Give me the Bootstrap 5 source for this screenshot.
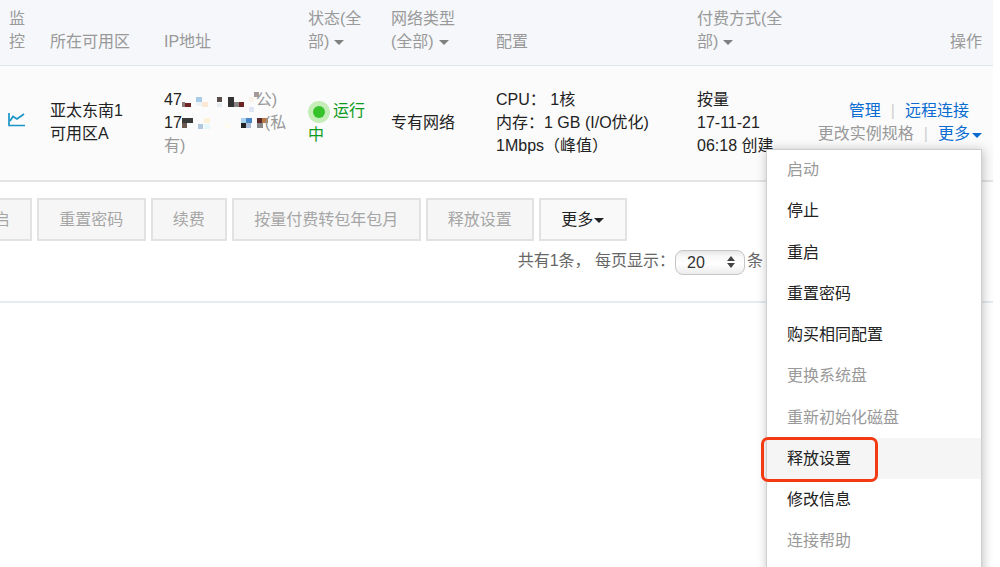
<!DOCTYPE html>
<html lang="zh">
<head>
<meta charset="utf-8">
<title>实例列表</title>
<link rel="stylesheet" href="https://cdn.jsdelivr.net/npm/bootstrap@5.3.0/dist/css/bootstrap.min.css">
<style>
html,body{height:567px;overflow:hidden;background:#fff}
body{font-family:"Liberation Sans","Noto Sans CJK SC",sans-serif;font-size:16px;color:#222;position:relative}
.inst-table{table-layout:fixed;width:993px;border-collapse:collapse;line-height:23px}
.inst-table th,.inst-table td{padding:0 9px;vertical-align:middle}
.inst-table th:last-child,.inst-table td:last-child{padding-right:11px}
.inst-table th{height:65px;background:#f5f7fa;border-bottom:1px solid #e1e6ec;color:#999;font-weight:400;vertical-align:bottom;padding-bottom:12px}
.inst-table td{height:116px;background:#fbfbfb;border-bottom:2px solid #e4e4e4;padding-bottom:1px}
.caret-s{display:inline-block;width:0;height:0;border:5px solid transparent;border-top:5px solid #808080;border-bottom:0;vertical-align:middle;margin-left:5px}
.caret-b{display:inline-block;width:0;height:0;border:5.5px solid transparent;border-top:5.5px solid #0a6cd0;border-bottom:0;vertical-align:middle;margin-left:2px}
.caret-k{display:inline-block;width:0;height:0;border:5px solid transparent;border-top:5px solid #222;border-bottom:0;vertical-align:middle;margin-left:1px}
.muted-t{color:#999}
.run-t{color:#0d9a1c}
.dot-wrap{display:inline-block;width:22px;height:22px;border-radius:50%;background:#c4edb8;vertical-align:middle;position:relative;margin-right:3px}
.dot-core{position:absolute;left:5px;top:5px;width:12px;height:12px;border-radius:50%;background:#35c22b}
.blur-a{vertical-align:-3px;overflow:visible}
.blue-a{color:#0a6cd0;text-decoration:none}
.sep-a{color:#d0d0d0;margin:0 10px}
.first-ln{padding-right:13px}
.chart-i{margin-bottom:5px}
.bar-a{margin:16px 0 0 -44.5px;gap:5px}
.act-btn{height:43px;padding:0 20.25px;font-size:16px;border:2px solid #e2e2e2;border-radius:0;background:#f6f6f6;color:#a6a6a6;white-space:nowrap}
.act-btn.on{color:#222;background:#f9f9f9;padding-right:21px}
.pager-a{width:993px;padding:8px 230px 26px 0;color:#666;border-bottom:2px solid #e6ebf1}
.pager-t{margin-bottom:2px}
.sel-a{width:70px;height:25px;margin:0 2px 0 0;padding:0 0 0 11px;font:16px/23px "Liberation Sans",sans-serif;color:#333;border:1px solid #c6c6c6;border-radius:8px;background:linear-gradient(#e6e6e6,#f8f8f8 25%,#fff 55%,#ececec);position:relative}
.spin-a{position:absolute;right:9px;top:5px;display:flex;flex-direction:column;gap:2px}
.spin-u,.spin-d{width:0;height:0;border:4px solid transparent}
.spin-u{border-bottom:5px solid #444;border-top:0}
.spin-d{border-top:5px solid #444;border-bottom:0}
.pop-menu{position:absolute;left:766px;top:149px;width:216px;height:440px;margin:0;padding:0;list-style:none;background:#fff;border:1px solid #cfcfcf;box-shadow:1px 1px 10px rgba(0,0,0,.25)}
.pop-item{height:41.25px;line-height:41.25px;padding-left:20px;color:#222}
.pop-item:first-child{margin-top:-1px}
.pop-item.off{color:#999}
.pop-item.hot{background:#f5f5f5}
.red-box{position:absolute;left:761px;top:437px;width:117px;height:45px;border:3px solid #f43a12;border-radius:7px}
</style>
</head>
<body>
<table class="inst-table">
<colgroup><col style="width:41px"><col style="width:114px"><col style="width:144px"><col style="width:83px"><col style="width:105px"><col style="width:201px"><col style="width:105px"><col></colgroup>
<thead><tr>
<th>监控</th><th>所在可用区</th><th>IP地址</th>
<th>状态(全部)<span class="caret-s"></span></th>
<th>网络类型<br>(全部)<span class="caret-s"></span></th>
<th>配置</th>
<th>付费方式(全部)<span class="caret-s"></span></th>
<th class="text-end">操作</th>
</tr></thead>
<tbody><tr>
<td class="px-0 ps-2"><svg class="d-block chart-i" width="17" height="14" viewBox="0 0 17 14" fill="none" stroke="#1b94c8" stroke-width="1.7"><path d="M1 0v12.5h16"/><path d="M2 8l3-4.5 4 2.5 7-5"/></svg></td>
<td>亚太东南1<br>可用区A</td>
<td>47<svg class="blur-a" width="74" height="16" viewBox="183 91 74 16"><rect x="183" y="101" width="3" height="5" fill="#8a7a78"/><rect x="186" y="102" width="6" height="4" fill="#6b2525"/><rect x="197" y="96" width="6" height="5" fill="#a7cbe9"/><rect x="203" y="101" width="6" height="5" fill="#fbe9d3"/><rect x="197" y="101" width="6" height="4" fill="#eef3f7"/><rect x="218" y="96" width="5" height="5" fill="#5a4e4a"/><rect x="218" y="102" width="5" height="4" fill="#e5edf3"/><rect x="229" y="96" width="6" height="10" fill="#333"/><rect x="235" y="101" width="5" height="5" fill="#8a8585"/><rect x="240" y="101" width="5" height="5" fill="#6b2525"/><rect x="250" y="96" width="5" height="5" fill="#fbf3ea"/><rect x="255" y="91" width="5" height="5" fill="#a39a98"/><rect x="250" y="106" width="5" height="5" fill="#dfe5f3"/></svg><span class="muted-t">公)</span><br>17<svg class="blur-a" width="83" height="16" viewBox="181 114 83 16"><rect x="181" y="117" width="11" height="5" fill="#3a3a3a"/><rect x="181" y="122" width="5" height="5" fill="#6a5a50"/><rect x="197" y="123" width="5" height="5" fill="#b0c7dd"/><rect x="203" y="117" width="6" height="5" fill="#fdf1d8"/><rect x="203" y="123" width="6" height="5" fill="#e6f7fa"/><rect x="224" y="122" width="5" height="5" fill="#fefbf0"/><rect x="240" y="117" width="5" height="5" fill="#a9d2ee"/><rect x="245" y="117" width="6" height="5" fill="#4a86c6"/><rect x="240" y="122" width="5" height="5" fill="#222"/><rect x="245" y="122" width="5" height="5" fill="#a9bdd9"/><rect x="256" y="117" width="5" height="5" fill="#5c2a2a"/><rect x="261" y="117" width="6" height="5" fill="#b87a45"/><rect x="256" y="122" width="6" height="5" fill="#888"/></svg><span class="muted-t">(私<br>有)</span></td>
<td class="run-t"><span class="dot-wrap"><span class="dot-core"></span></span>运行<br>中</td>
<td>专有网络</td>
<td>CPU：&nbsp;1核<br>内存：1 GB (I/O优化)<br>1Mbps（峰值）</td>
<td class="text-nowrap">按量<br>17-11-21<br>06:18 创建</td>
<td class="text-end text-nowrap"><div class="first-ln"><a class="blue-a" href="#">管理</a><span class="sep-a">|</span><a class="blue-a" href="#">远程连接</a></div><div><span class="muted-t">更改实例规格</span><span class="sep-a">|</span><a class="blue-a" href="#">更多<span class="caret-b"></span></a></div></td>
</tr></tbody>
</table>
<div class="d-flex bar-a">
<button class="btn act-btn" type="button">重启</button>
<button class="btn act-btn" type="button">重置密码</button>
<button class="btn act-btn" type="button">续费</button>
<button class="btn act-btn" type="button">按量付费转包年包月</button>
<button class="btn act-btn" type="button">释放设置</button>
<button class="btn act-btn on" type="button">更多<span class="caret-k"></span></button>
</div>
<div class="d-flex justify-content-end align-items-center pager-a">
<span class="pager-t">共有1条， 每页显示：</span>
<div class="sel-a">20<span class="spin-a"><span class="spin-u"></span><span class="spin-d"></span></span></div>
<span class="pager-t">条</span>
</div>
<ul class="pop-menu">
<li class="pop-item off">启动</li>
<li class="pop-item">停止</li>
<li class="pop-item">重启</li>
<li class="pop-item">重置密码</li>
<li class="pop-item">购买相同配置</li>
<li class="pop-item off">更换系统盘</li>
<li class="pop-item off">重新初始化磁盘</li>
<li class="pop-item hot">释放设置</li>
<li class="pop-item">修改信息</li>
<li class="pop-item off">连接帮助</li>
</ul>
<div class="red-box"></div>
<script src="https://cdn.jsdelivr.net/npm/bootstrap@5.3.0/dist/js/bootstrap.bundle.min.js"></script>
</body>
</html>
